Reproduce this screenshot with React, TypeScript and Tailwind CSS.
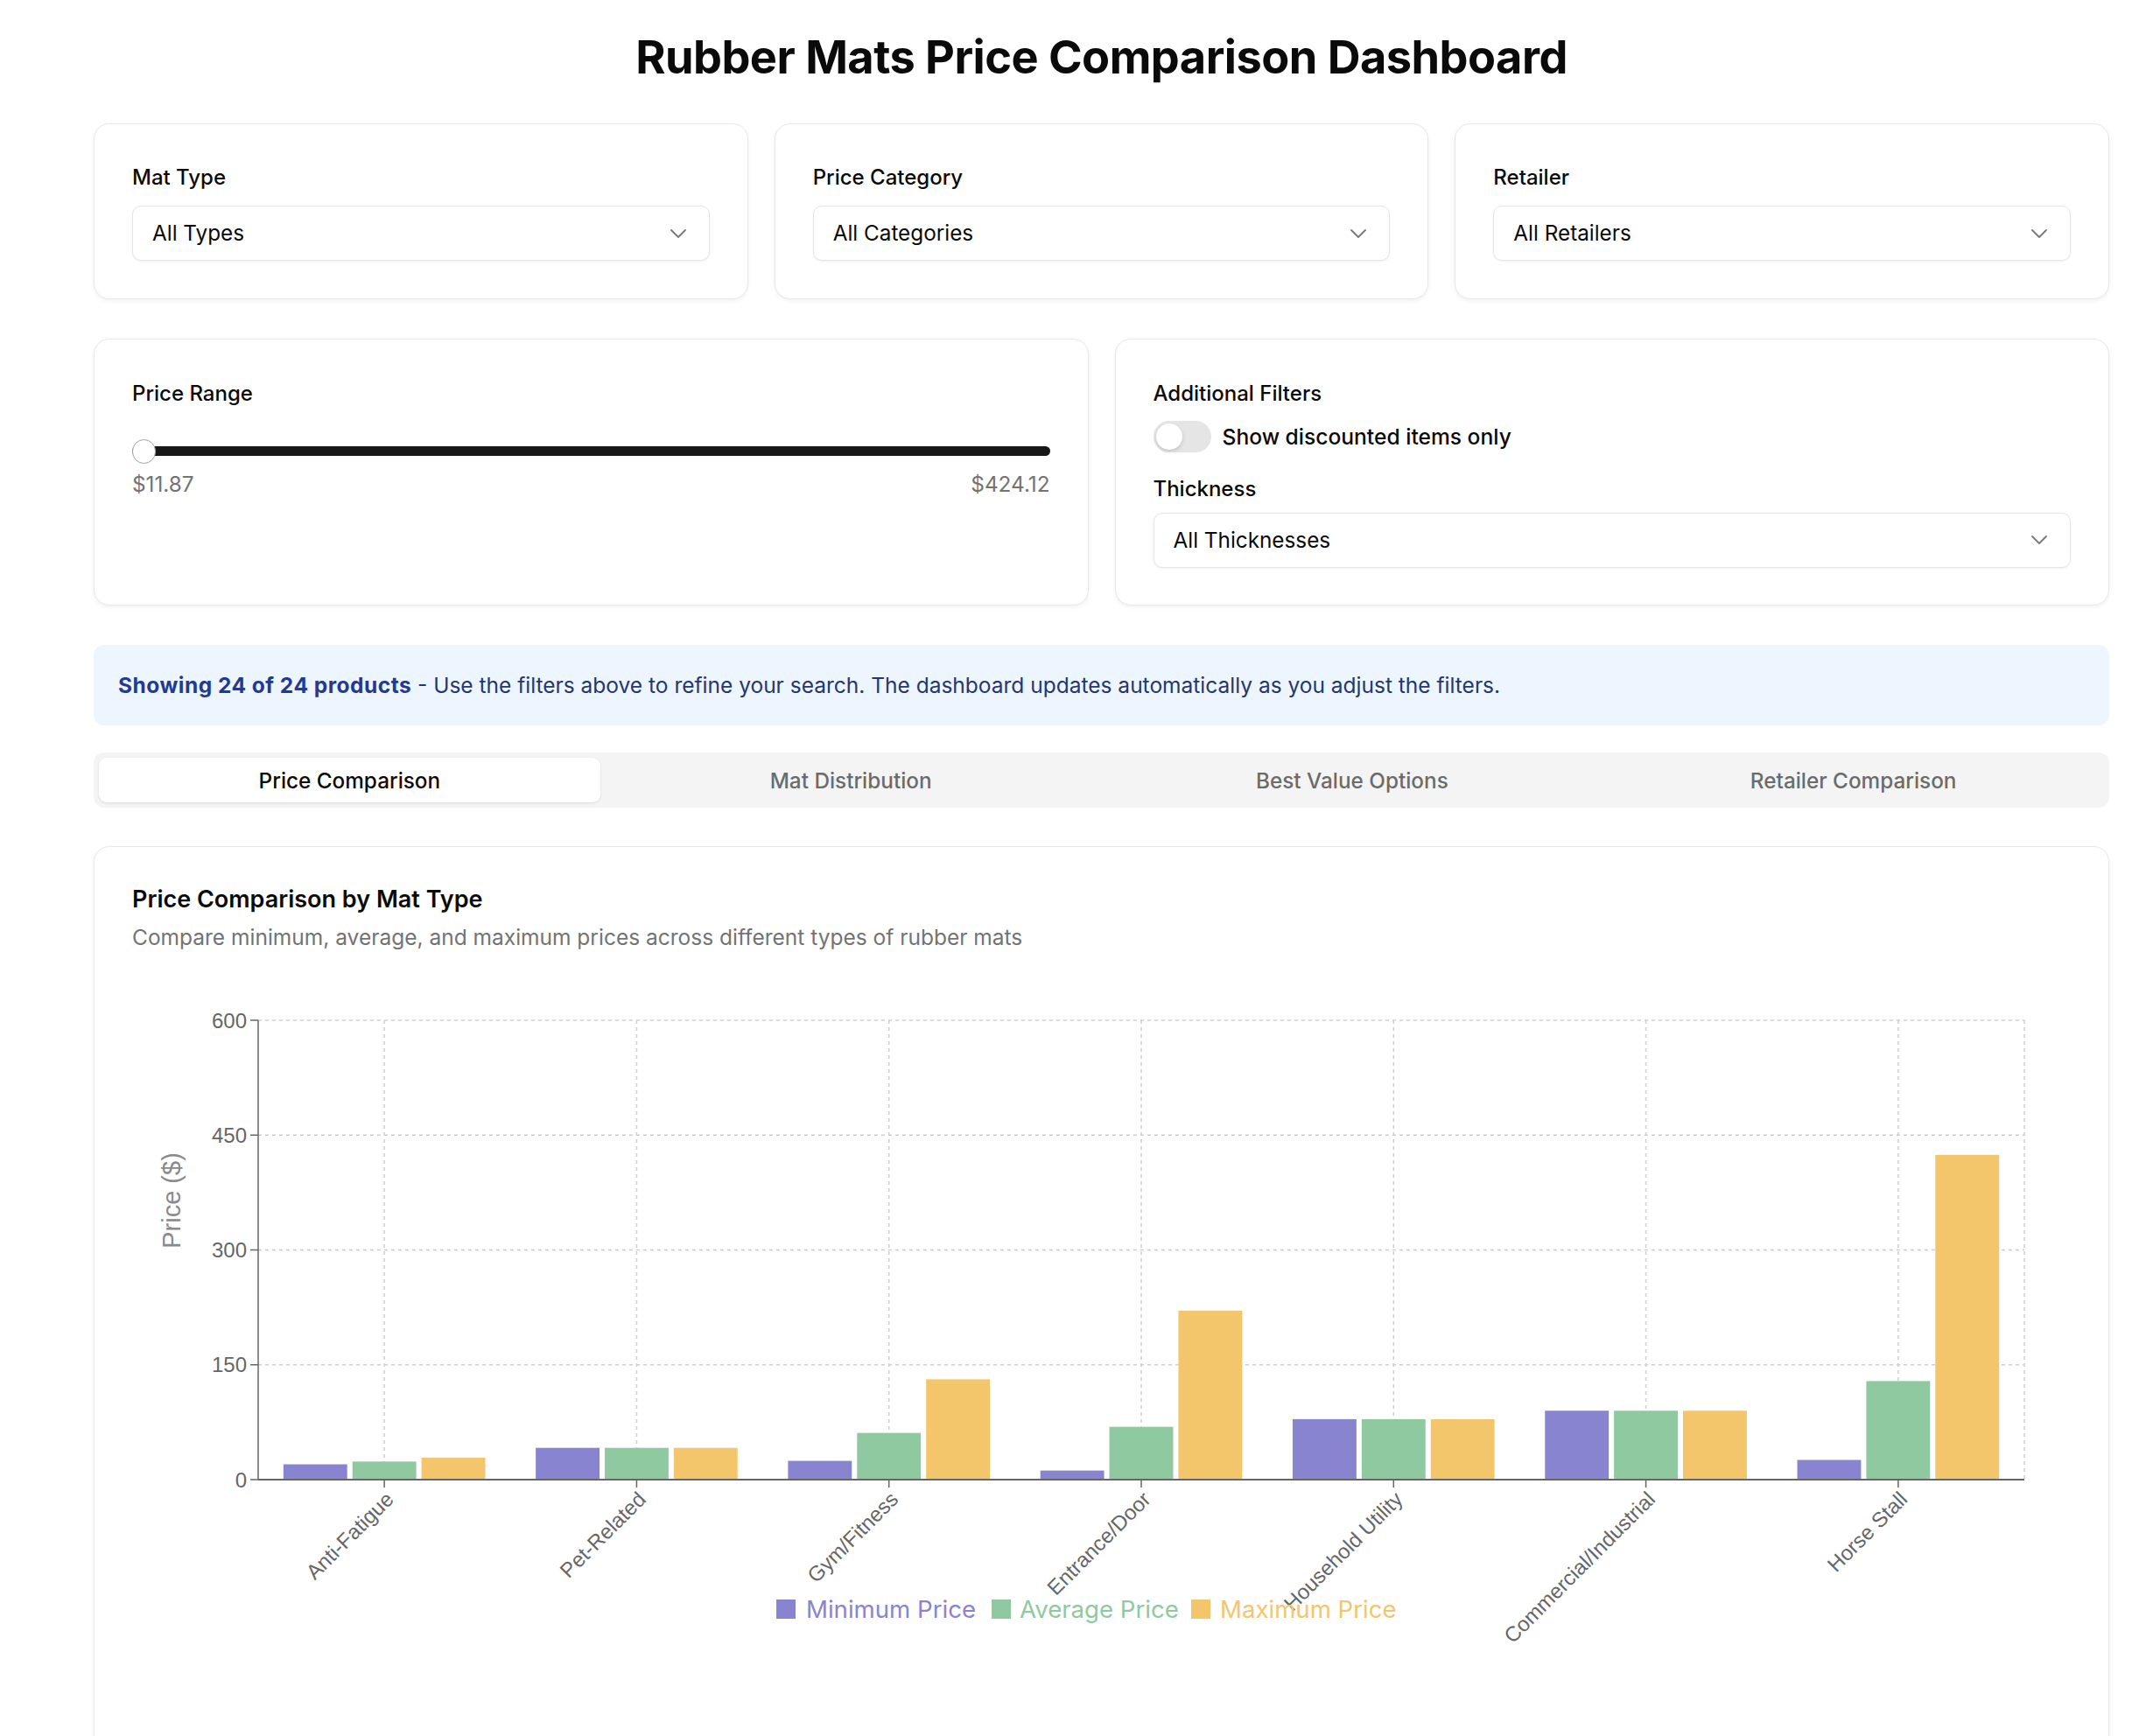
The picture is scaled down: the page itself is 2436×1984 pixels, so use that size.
import React from 'react';
import { ChevronDown } from 'lucide-react';

interface MatStat {
  name: string;
  min: number;
  avg: number;
  max: number;
}

const chartData: MatStat[] = [
  { name: 'Anti-Fatigue', min: 20, avg: 23.6, max: 28.8 },
  { name: 'Pet-Related', min: 41.5, avg: 41.5, max: 41.5 },
  { name: 'Gym/Fitness', min: 24.5, avg: 61, max: 131 },
  { name: 'Entrance/Door', min: 11.87, avg: 69, max: 220.8 },
  { name: 'Household Utility', min: 79, avg: 79, max: 79 },
  { name: 'Commercial/Industrial', min: 90, avg: 90, max: 90 },
  { name: 'Horse Stall', min: 25.7, avg: 128.7, max: 424.12 },
];

const COLORS = {
  min: '#8884d0',
  avg: '#8fc9a0',
  max: '#f3c66c',
};

const Card: React.FC<{ className?: string; children: React.ReactNode }> = ({ className = '', children }) => (
  <div
    className={`rounded-[18px] border border-[#e8e8e8] bg-white shadow-[0_2px_5px_rgba(0,0,0,0.06)] ${className}`}
  >
    {children}
  </div>
);

const SelectBox: React.FC<{ value: string }> = ({ value }) => (
  <div className="flex h-[63px] items-center justify-between rounded-[10px] border border-[#e5e5e5] bg-white pl-[22px] pr-[19px] shadow-[0_1px_3px_rgba(0,0,0,0.06)]">
    <span className="text-[24.3px] text-[#0a0a0a]">{value}</span>
    <ChevronDown size={32} strokeWidth={1.4} className="text-[#7a7a7a]" />
  </div>
);

const FilterLabel: React.FC<{ children: React.ReactNode }> = ({ children }) => (
  <div className="text-[24px] leading-[30px] font-medium text-[#0a0a0a]">{children}</div>
);

// Grouped bar chart, drawn by hand the way recharts lays it out
const PriceChart: React.FC = () => {
  const left = 144;
  const right = 2162;
  const top = 57;
  const bottom = 582;
  const maxVal = 600;
  const band = (right - left) / chartData.length;
  const barW = (band * 0.8 - 12) / 3;
  const yFor = (v: number) => bottom - (v / maxVal) * (bottom - top);
  const ticks = [0, 150, 300, 450, 600];

  return (
    <svg width={2215} height={880} className="block font-['Liberation_Sans',Arial,sans-serif]">
      {/* grid */}
      {ticks.slice(1).map((t) => (
        <line key={`h-${t}`} x1={left} x2={right} y1={yFor(t)} y2={yFor(t)} stroke="#cfcfcf" strokeWidth={1.5} strokeDasharray="4 4" />
      ))}
      {chartData.map((d, i) => {
        const cx = left + band * i + band / 2;
        return <line key={`v-${d.name}`} x1={cx} x2={cx} y1={top} y2={bottom} stroke="#cfcfcf" strokeWidth={1.5} strokeDasharray="4 4" />;
      })}
      <line x1={right} x2={right} y1={top} y2={bottom} stroke="#cfcfcf" strokeWidth={1.5} strokeDasharray="4 4" />

      {/* bars */}
      {chartData.map((d, i) => {
        const x0 = left + band * i + band * 0.1;
        return (
          <g key={`b-${d.name}`}>
            {(['min', 'avg', 'max'] as const).map((k, j) => (
              <rect
                key={k}
                x={x0 + j * (barW + 6)}
                y={yFor(d[k])}
                width={barW}
                height={bottom - yFor(d[k])}
                fill={COLORS[k]}
              />
            ))}
          </g>
        );
      })}

      {/* y axis */}
      <line x1={left} x2={left} y1={top} y2={bottom} stroke="#666" strokeWidth={1.5} />
      {ticks.map((t) => (
        <g key={`yt-${t}`}>
          <line x1={left - 9} x2={left} y1={yFor(t)} y2={yFor(t)} stroke="#666" strokeWidth={1.5} />
          <text x={left - 13} y={yFor(t)} dy="0.355em" textAnchor="end" fontSize={24} fill="#666">
            {t}
          </text>
        </g>
      ))}
      <text
        x={45}
        y={263}
        textAnchor="middle"
        fontSize={29}
        fill="#8a8a8a"
        transform="rotate(-90 45 263)"
        dy="0.355em"
      >
        Price ($)
      </text>

      {/* x axis */}
      <line x1={left} x2={right} y1={bottom} y2={bottom} stroke="#666" strokeWidth={2} />
      {chartData.map((d, i) => {
        const cx = left + band * i + band / 2;
        const ty = bottom + 12;
        return (
          <g key={`xt-${d.name}`}>
            <line x1={cx} x2={cx} y1={bottom} y2={bottom + 9} stroke="#666" strokeWidth={1.5} />
            <text x={cx} y={ty} dy="0.71em" textAnchor="end" fontSize={24} fill="#666" transform={`rotate(-45 ${cx} ${ty})`}>
              {d.name}
            </text>
          </g>
        );
      })}

      {/* legend */}
      <g className="font-['Inter',sans-serif]" fontSize={27.6}>
        <rect x={736} y={719} width={22} height={22} fill={COLORS.min} />
        <text x={770} y={730} dy="0.355em" fill={COLORS.min}>Minimum Price</text>
        <rect x={982} y={719} width={22} height={22} fill={COLORS.avg} />
        <text x={1014} y={730} dy="0.355em" fill={COLORS.avg}>Average Price</text>
        <rect x={1210} y={719} width={22} height={22} fill={COLORS.max} />
        <text x={1243} y={730} dy="0.355em" fill={COLORS.max}>Maximum Price</text>
      </g>
    </svg>
  );
};

export default function App() {
  const tabs = ['Price Comparison', 'Mat Distribution', 'Best Value Options', 'Retailer Comparison'];

  return (
    <div className="min-h-screen bg-white font-['Inter','Noto_Sans',sans-serif] text-[#0a0a0a]">
      <div className="ml-[107px] w-[2303px] pt-[34px]">
        <h1 className="text-center text-[52.3px] leading-[62px] font-bold tracking-[-0.01em]">
          Rubber Mats Price Comparison Dashboard
        </h1>

        {/* Top filters */}
        <div className="mt-[45px] grid grid-cols-3 gap-[30px]">
          <Card className="px-[43px] pt-[46px] pb-[43px]">
            <FilterLabel>Mat Type</FilterLabel>
            <div className="mt-[17px]">
              <SelectBox value="All Types" />
            </div>
          </Card>
          <Card className="px-[43px] pt-[46px] pb-[43px]">
            <FilterLabel>Price Category</FilterLabel>
            <div className="mt-[17px]">
              <SelectBox value="All Categories" />
            </div>
          </Card>
          <Card className="px-[43px] pt-[46px] pb-[43px]">
            <FilterLabel>Retailer</FilterLabel>
            <div className="mt-[17px]">
              <SelectBox value="All Retailers" />
            </div>
          </Card>
        </div>

        {/* Price range + extra filters */}
        <div className="mt-[45px] grid grid-cols-2 gap-[30px]">
          <Card className="px-[43px] pt-[46.5px] pb-[42.5px]">
            <FilterLabel>Price Range</FilterLabel>
            <div className="relative mt-[37px] flex h-[28px] items-center">
              <div className="h-[11px] w-full rounded-full bg-[#171717]" />
              <div className="absolute left-0 top-0 h-[28px] w-[27px] rounded-full border-[1.5px] border-[#a3a3a3] bg-white" />
            </div>
            <div className="mt-[8.5px] flex justify-between text-[24.3px] leading-[30px] text-[#737373]">
              <span>$11.87</span>
              <span>$424.12</span>
            </div>
          </Card>
          <Card className="px-[43px] pt-[46.5px] pb-[42.5px]">
            <FilterLabel>Additional Filters</FilterLabel>
            <div className="mt-[16px] flex items-center gap-[13px]">
              <div className="flex h-[36px] w-[66px] items-center rounded-full bg-[#e5e5e5] p-[3px]">
                <div className="h-[30px] w-[30px] rounded-full bg-white shadow-[0_2px_4px_rgba(0,0,0,0.15)]" />
              </div>
              <span className="text-[24.6px] font-medium">Show discounted items only</span>
            </div>
            <div className="mt-[27px]">
              <FilterLabel>Thickness</FilterLabel>
            </div>
            <div className="mt-[11.5px]">
              <SelectBox value="All Thicknesses" />
            </div>
          </Card>
        </div>

        {/* Result summary */}
        <div className="mt-[45px] rounded-[12px] bg-[#edf5fe] px-[28px] py-[28px] text-[24.5px] leading-[36px] text-[#26366f]">
          <span className="font-bold tracking-[0.02em] text-[#243a91]">Showing 24 of 24 products</span> - Use the filters
          above to refine your search. The dashboard updates automatically as you adjust the filters.
        </div>

        {/* Tabs */}
        <div className="mt-[31px] grid grid-cols-4 rounded-[12px] bg-[#f4f4f5] p-[6px]">
          {tabs.map((t, i) => (
            <div
              key={t}
              className={`flex h-[51px] items-center justify-center rounded-[9px] text-[24.3px] font-medium ${
                i === 0 ? 'bg-white text-[#0a0a0a] shadow-[0_1px_3px_rgba(0,0,0,0.1)]' : 'text-[#6b6b6b]'
              }`}
            >
              {t}
            </div>
          ))}
        </div>

        {/* Chart card */}
        <Card className="mt-[44px] px-[43px] pt-[42.5px] pb-[44px]">
          <h2 className="text-[27px] leading-[34px] font-semibold">Price Comparison by Mat Type</h2>
          <p className="mt-[11px] text-[24.5px] leading-[30px] text-[#737373]">
            Compare minimum, average, and maximum prices across different types of rubber mats
          </p>
          <div className="mt-[23.5px]">
            <PriceChart />
          </div>
        </Card>
      </div>
    </div>
  );
}
